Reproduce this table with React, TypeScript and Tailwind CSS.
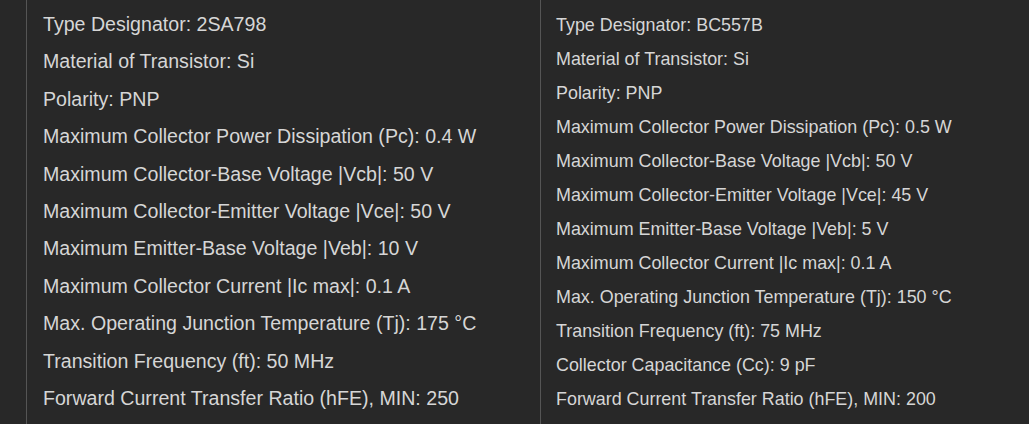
import React from "react"

const left = [
  "Type Designator: 2SA798",
  "Material of Transistor: Si",
  "Polarity: PNP",
  "Maximum Collector Power Dissipation (Pc): 0.4 W",
  "Maximum Collector-Base Voltage |Vcb|: 50 V",
  "Maximum Collector-Emitter Voltage |Vce|: 50 V",
  "Maximum Emitter-Base Voltage |Veb|: 10 V",
  "Maximum Collector Current |Ic max|: 0.1 A",
  "Max. Operating Junction Temperature (Tj): 175 °C",
  "Transition Frequency (ft): 50 MHz",
  "Forward Current Transfer Ratio (hFE), MIN: 250",
]

const right = [
  "Type Designator: BC557B",
  "Material of Transistor: Si",
  "Polarity: PNP",
  "Maximum Collector Power Dissipation (Pc): 0.5 W",
  "Maximum Collector-Base Voltage |Vcb|: 50 V",
  "Maximum Collector-Emitter Voltage |Vce|: 45 V",
  "Maximum Emitter-Base Voltage |Veb|: 5 V",
  "Maximum Collector Current |Ic max|: 0.1 A",
  "Max. Operating Junction Temperature (Tj): 150 °C",
  "Transition Frequency (ft): 75 MHz",
  "Collector Capacitance (Cc): 9 pF",
  "Forward Current Transfer Ratio (hFE), MIN: 200",
]

export default function App() {
  return (
    <div className="flex h-[424px] w-[1029px] overflow-hidden bg-[#282828] text-[#d6d6d6] font-['Liberation_Sans',Arial,sans-serif]">
      <div className="w-[26px] shrink-0" />
      {/* left spec list */}
      <div className="w-[514px] shrink-0 border-l border-[#555555] pl-[16px] pt-[6px]">
        {left.map((row) => (
          <div key={row} className="text-[19.6px] leading-[37.4px] whitespace-nowrap">
            {row}
          </div>
        ))}
      </div>
      {/* right spec list */}
      <div className="flex-1 border-l border-[#555555] pl-[15px] pt-[8px]">
        {right.map((row) => (
          <div key={row} className="text-[17.9px] leading-[34px] whitespace-nowrap">
            {row}
          </div>
        ))}
      </div>
    </div>
  )
}
